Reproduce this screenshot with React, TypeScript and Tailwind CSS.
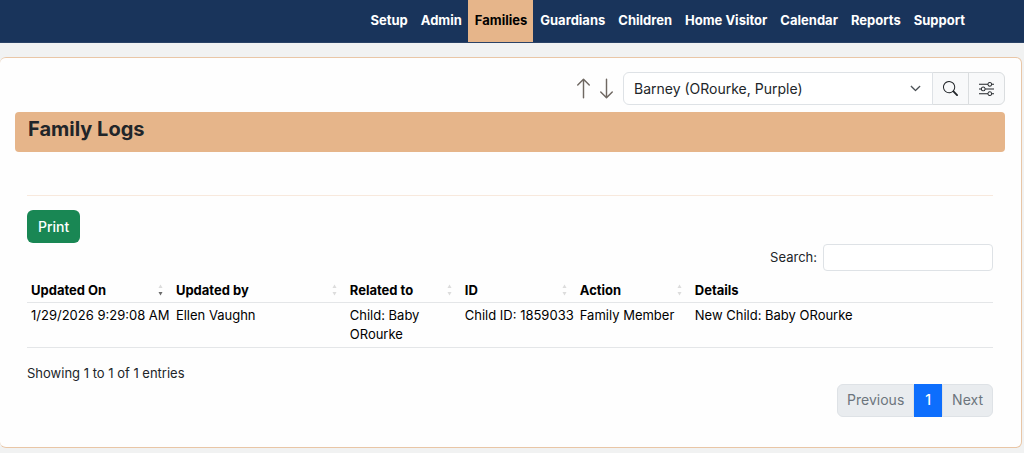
import { useState } from 'react'
import { BsArrowDown, BsArrowUp, BsChevronDown, BsSearch, BsSliders } from 'react-icons/bs'

const links = ['Setup', 'Admin', 'Families', 'Guardians', 'Children', 'Home Visitor', 'Calendar', 'Reports', 'Support']

const columns = [
    { name: 'Updated On', width: 'w-[15%]' },
    { name: 'Updated by', width: 'w-[18%]' },
    { name: 'Related to', width: 'w-[115px]' },
    { name: 'ID', width: 'w-[115px]' },
    { name: 'Action', width: 'w-[115px]' },
    { name: 'Details', width: '' },
]

const logs = [
    ['1/29/2026 9:29:08 AM', 'Ellen Vaughn', 'Child: Baby ORourke', 'Child ID: 1859033', 'Family Member', 'New Child: Baby ORourke'],
]

const SortIcon = ({ desc }: { desc: boolean }) => (
    <svg viewBox="0 0 5 12" className="h-3 w-[5px] shrink-0">
        <path d="M0.5 4 2.5 0.5 4.5 4Z" fill="#dcdcdc" />
        <path d="M0.5 8 2.5 11.5 4.5 8Z" fill={desc ? '#6b6b6b' : '#dcdcdc'} />
    </svg>
)

const NavBar = () => (
    <nav className="flex h-[43px] items-stretch justify-end border-b border-[#2a4266] bg-[#19345b] pr-[53px] text-[13px] font-bold text-white">
        {links.map((l) => (
            <a key={l} href="#" className={`pt-[10px] pr-[6px] pl-[7px] leading-5 ${l === 'Families' ? 'bg-[#e6b58a] text-black' : ''}`}>{l}</a>
        ))}
    </nav>
)

const FamilyPicker = () => (
    <div className="flex items-center justify-end">
        <button aria-label="Previous family" className="text-[#6f6862]"><BsArrowUp size={23} /></button>
        <button aria-label="Next family" className="mr-[5px] text-[#6f6862]"><BsArrowDown size={23} /></button>
        <div className="relative w-[310px]">
            <select aria-label="Family" className="h-[33px] w-full appearance-none rounded-l-md border border-[#dee2e6] bg-white pl-[10px] text-sm text-[#212529]">
                <option>Barney (ORourke, Purple)</option>
            </select>
            <BsChevronDown size={11} strokeWidth={1} className="pointer-events-none absolute top-[11px] right-3 text-[#343a40]" />
        </div>
        <button aria-label="Search families" className="-ml-px flex h-[33px] w-[37px] items-center justify-center border border-[#dadddf] bg-[#f8f9fa] text-[#212529]"><BsSearch size={15} /></button>
        <button aria-label="Filters" className="-ml-px flex h-[33px] w-[37px] items-center justify-center rounded-r-md border border-[#dadddf] bg-[#f8f9fa] text-[#212529]"><BsSliders size={15} /></button>
    </div>
)

const LogTable = ({ rows }: { rows: string[][] }) => (
    <table className="mt-2 w-full table-fixed text-left text-[13px] text-black">
        <thead>
            <tr className="border-b border-[#e4e6e8]">
                {columns.map((c, i) => (
                    <th key={c.name} className={`h-[23px] pr-[9px] pl-1 font-bold ${c.width}`}>
                        <div className="flex items-center justify-between">
                            {c.name}
                            {i < columns.length - 1 && <SortIcon desc={i === 0} />}
                        </div>
                    </th>
                ))}
            </tr>
        </thead>
        <tbody>
            {rows.map((r) => (
                <tr key={r[0]} className="border-b border-[#e4e6e8]">
                    {r.map((v, i) => (
                        <td key={i} className={`py-[3px] pl-1 align-top leading-[19px] ${i === 2 ? 'pr-4' : 'whitespace-nowrap'}`}>{v}</td>
                    ))}
                </tr>
            ))}
        </tbody>
    </table>
)

export default function App() {
    const [query, setQuery] = useState('')
    const rows = logs.filter((r) => r.join(' ').toLowerCase().includes(query.toLowerCase()))
    return (
        <div className="min-h-screen bg-[#f1f2f2] pb-[5px] font-['Inter','Liberation_Sans',sans-serif] text-[#212529]">
            <NavBar />
            <main className="mt-[14px] mr-[2px] rounded-md border border-l-0 border-[#e9c6a6] bg-[#fefefe] pt-[14px] pr-4 pb-[30px] pl-[15px]">
                <FamilyPicker />
                <h1 className="mt-[7px] h-10 rounded bg-[#e6b58a] pt-px pl-[13px] text-xl leading-8 font-bold">Family Logs</h1>
                <div className="px-3">
                    <hr className="mt-[43px] border-[#f8e9dd]" />
                    <button className="mt-[14px] block h-[33px] rounded-md bg-[#198754] px-[11px] text-sm font-medium text-white">Print</button>
                    <div className="mt-px flex items-center justify-end gap-[6px] text-[13px]">
                        <label htmlFor="search">Search:</label>
                        <input id="search" type="search" value={query} onChange={(e) => setQuery(e.target.value)} className="h-[27px] w-[170px] rounded border border-[#dee2e6] bg-white px-2" />
                    </div>
                    <LogTable rows={rows} />
                    <p className="mt-[15px] mb-px text-[13px] leading-5">Showing 1 to 1 of 1 entries</p>
                    <div className="flex justify-end text-sm">
                        <button disabled className="h-[33px] rounded-l-md border border-[#dee2e6] bg-[#e9ecef] px-[9px] text-[#6c757d]">Previous</button>
                        <button className="h-[33px] bg-[#0d6efd] px-[11px] font-medium text-white">1</button>
                        <button disabled className="h-[33px] rounded-r-md border border-[#dee2e6] bg-[#e9ecef] px-[9px] text-[#6c757d]">Next</button>
                    </div>
                </div>
            </main>
        </div>
    )
}
